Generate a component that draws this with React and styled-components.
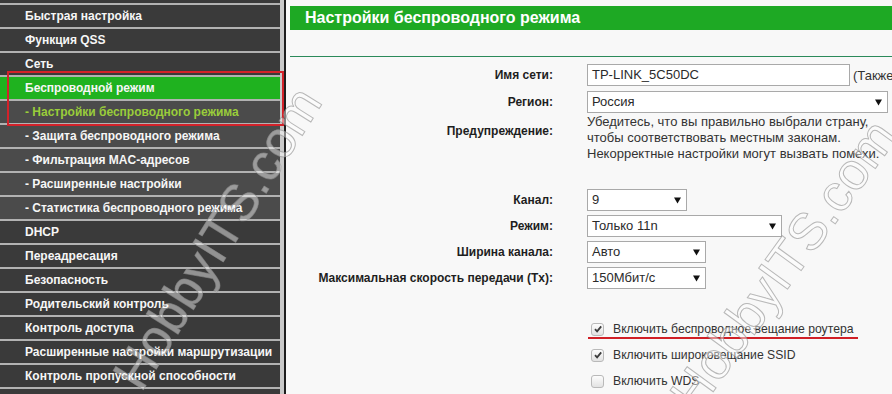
import React from 'react';
import styled, { createGlobalStyle, css } from 'styled-components';

const Global = createGlobalStyle`
  html, body { margin: 0; padding: 0; }
  body {
    width: 892px; height: 394px; overflow: hidden;
    background: #f8f8f8;
    font-family: "Liberation Sans", Arial, sans-serif;
  }
`;

const Page = styled.div`
  position: relative;
  display: flex;
  width: 892px;
  height: 394px;
  overflow: hidden;
`;

const Sidebar = styled.nav`
  position: relative;
  flex: 0 0 280px;
  background: #3a3a3a;
  padding-top: 3px;
  border-right: 4px solid #c9c9c9;
  box-shadow: 2px 0 0 0 #1e1e1e;
  margin-right: 2px;
`;

const MenuItem = styled.div`
  height: 22px;
  line-height: 22px;
  border-top: 2px solid #b2b2b2;
  padding-left: 25px;
  font-size: 12px;
  font-weight: bold;
  color: #f6f6f6;
  white-space: nowrap;
  background: #3a3a3a;
  ${p => p.$sub && css`background: #4b4b4b;`}
  ${p => p.$active && css`background: #1fb21f;`}
  ${p => p.$current && css`color: #9acd3a;`}
`;

const Highlight = styled.div`
  position: absolute;
  left: 7px;
  top: 71px;
  width: 273px;
  height: 51px;
  border: 2px solid #d3222a;
  pointer-events: none;
`;

const Content = styled.main`
  flex: 1;
  padding: 6px 0 0 4px;
  background: #f8f8f8;
  min-width: 0;
`;

const TitleBar = styled.h1`
  margin: 0;
  height: 24px;
  line-height: 23px;
  background: #1ea924;
  color: #ffffff;
  font-size: 16px;
  font-weight: bold;
  padding-left: 15px;
  white-space: nowrap;
`;

const Rule = styled.div`
  margin-top: 26px;
  height: 1px;
  background: #2b8a5a;
`;

const Form = styled.div`
  display: flex;
  flex-direction: column;
`;

const Row = styled.div`
  display: grid;
  grid-template-columns: 263px 1fr;
  column-gap: 34px;
  align-items: center;
  margin-top: ${p => p.$mt}px;
  ${p => p.$top && css`align-items: start;`}
`;

const Label = styled.div`
  text-align: right;
  font-size: 12px;
  font-weight: bold;
  color: #1e1e1e;
  white-space: nowrap;
  ${p => p.$pt && css`padding-top: ${p.$pt}px; line-height: 16px;`}
`;

const Control = styled.div`
  display: flex;
  align-items: center;
  gap: 3px;
  white-space: nowrap;
`;

const TextInput = styled.div`
  box-sizing: border-box;
  width: 263px;
  height: 22px;
  border: 1px solid #a9a9a9;
  background: #fff;
  font-size: 13px;
  line-height: 20px;
  padding-left: 4px;
  color: #2a2a2a;
`;

const Aside = styled.span`
  font-size: 13px;
  color: #333;
`;

const SelectBox = styled.div`
  box-sizing: border-box;
  position: relative;
  width: ${p => p.$w}px;
  height: 22px;
  border: 1px solid #a9a9a9;
  background: #fff;
  font-size: 13px;
  line-height: 20px;
  padding-left: 4px;
  color: #2a2a2a;
`;

const Arrow = styled.svg`
  position: absolute;
  right: 5px;
  top: 7px;
`;

const Warning = styled.div`
  font-size: 13px;
  line-height: 16px;
  color: #333;
  white-space: nowrap;
`;

const Checks = styled.div`
  margin-top: 27px;
  padding-left: 297px;
  display: flex;
  flex-direction: column;
`;

const CheckRow = styled.div`
  position: relative;
  height: 26px;
  display: flex;
  align-items: center;
  gap: 9px;
  padding-left: 4px;
  font-size: 12.2px;
  color: #333;
  white-space: nowrap;
  ${p => p.$marked && css`
    &::after {
      content: '';
      position: absolute;
      left: 1px;
      top: 21px;
      width: 270px;
      height: 2px;
      background: #d01f26;
    }
  `}
`;

const Box = styled.span`
  box-sizing: border-box;
  width: 13px;
  height: 13px;
  border: 1px solid #b9b9b9;
  border-radius: 3px;
  background: linear-gradient(#fdfdfd, #e2e2e2);
  display: flex;
  align-items: center;
  justify-content: center;
`;

const Watermark = styled.span`
  position: absolute;
  left: ${p => p.$x}px;
  top: ${p => p.$y}px;
  transform: translate(-50%, -50%) rotate(${p => p.$a}deg);
  font-family: "Liberation Sans", Arial, sans-serif;
  font-size: 52px;
  color: rgba(255, 255, 255, 0.45);
  -webkit-text-stroke: 1px rgba(140, 140, 140, 0.6);
  white-space: nowrap;
  pointer-events: none;
`;

const menu = [
  { t: 'Быстрая настройка' },
  { t: 'Функция QSS' },
  { t: 'Сеть' },
  { t: 'Беспроводной режим', active: true },
  { t: '- Настройки беспроводного режима', sub: true, current: true },
  { t: '- Защита беспроводного режима', sub: true },
  { t: '- Фильтрация MAC-адресов', sub: true },
  { t: '- Расширенные настройки', sub: true },
  { t: '- Статистика беспроводного режима', sub: true },
  { t: 'DHCP' },
  { t: 'Переадресация' },
  { t: 'Безопасность' },
  { t: 'Родительский контроль' },
  { t: 'Контроль доступа' },
  { t: 'Расширенные настройки маршрутизации' },
  { t: 'Контроль пропускной способности' },
  { t: 'Привязка IP- и MAC-адресов' },
];

const Tri = () => (
  <Arrow width="7" height="7" viewBox="0 0 7 7">
    <path d="M0 0.5 H7 L3.5 6.5 Z" fill="#111" />
  </Arrow>
);

const Select = ({ w, children }) => (
  <SelectBox $w={w}>
    {children}
    <Tri />
  </SelectBox>
);

const Check = ({ checked }) => (
  <Box>
    {checked && (
      <svg width="10" height="10" viewBox="0 0 10 10">
        <path d="M2 5.2 L4.1 7.4 L8.2 2.4" fill="none" stroke="#3c3c3c" strokeWidth="1.8" />
      </svg>
    )}
  </Box>
);

export default function App() {
  return (
    <>
      <Global />
      <Page>
        <Sidebar>
          {menu.map((m, i) => (
            <MenuItem key={i} $sub={m.sub} $active={m.active} $current={m.current}>
              {m.t}
            </MenuItem>
          ))}
          <Highlight />
        </Sidebar>
        <Content>
          <TitleBar>Настройки беспроводного режима</TitleBar>
          <Rule />
          <Form>
            <Row $mt={7}>
              <Label>Имя сети:</Label>
              <Control>
                <TextInput>TP-LINK_5C50DC</TextInput>
                <Aside>(Также</Aside>
              </Control>
            </Row>
            <Row $mt={5}>
              <Label>Регион:</Label>
              <Control>
                <Select w={301}>Россия</Select>
              </Control>
            </Row>
            <Row $mt={1} $top>
              <Label $pt={9}>Предупреждение:</Label>
              <Warning>
                Убедитесь, что вы правильно выбрали страну,<br />
                чтобы соответствовать местным законам.<br />
                Некорректные настройки могут вызвать помехи.
              </Warning>
            </Row>
            <Row $mt={27}>
              <Label>Канал:</Label>
              <Control><Select w={100}>9</Select></Control>
            </Row>
            <Row $mt={4}>
              <Label>Режим:</Label>
              <Control><Select w={195}>Только 11n</Select></Control>
            </Row>
            <Row $mt={4}>
              <Label>Ширина канала:</Label>
              <Control><Select w={119}>Авто</Select></Control>
            </Row>
            <Row $mt={4}>
              <Label>Максимальная скорость передачи (Tx):</Label>
              <Control><Select w={119}>150Мбит/с</Select></Control>
            </Row>
          </Form>
          <Checks>
            <CheckRow $marked><Check checked />Включить беспроводное вещание роутера</CheckRow>
            <CheckRow><Check checked />Включить широковещание SSID</CheckRow>
            <CheckRow><Check />Включить WDS</CheckRow>
          </Checks>
        </Content>
        <Watermark $x={217} $y={238} $a={-58}>HobbyITS.com</Watermark>
        <Watermark $x={783} $y={265} $a={-54}>HobbyITS.com</Watermark>
      </Page>
    </>
  );
}
